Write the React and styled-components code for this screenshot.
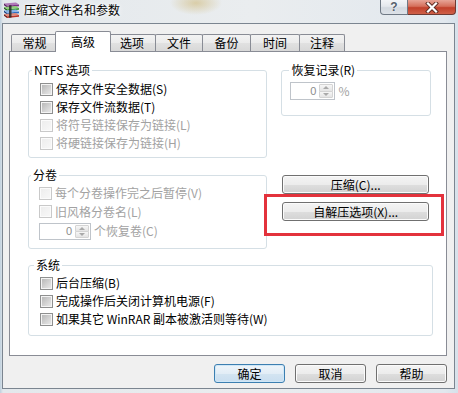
import React from "react";
import styled, { createGlobalStyle, css } from "styled-components";

const GlobalStyle = createGlobalStyle`
  html, body { margin: 0; padding: 0; }
  body {
    font-family: "Noto Sans CJK SC", "Noto Sans", sans-serif;
    font-size: 12px;
    color: #000;
  }
`;

const Frame = styled.div`
  width: 458px;
  height: 393px;
  overflow: hidden;
  display: flex;
  flex-direction: column;
  background:
    radial-gradient(ellipse 26px 12px at 196px 3px, rgba(205, 180, 110, 0.55), rgba(205, 180, 110, 0)),
    linear-gradient(to right, #bfd0de 0px, #e3e8ec 3px, #eaedef 55%, #e2e8ee 97%, #d6e1ea 100%);
`;

const TitleBar = styled.div`
  height: 23px;
  display: flex;
  align-items: flex-start;
  flex-shrink: 0;
`;

const AppIcon = styled.svg`
  margin: 2px 0 0 3px;
  flex-shrink: 0;
`;

const Title = styled.div`
  margin-left: 4px;
  line-height: 20px;
  font-size: 12px;
  color: #000;
  text-shadow: 0 0 6px #fff, 0 0 3px #fff;
`;

const Caption = styled.div`
  margin-left: auto;
  margin-right: 2px;
  display: flex;
`;

const CaptionButton = styled.div`
  height: 15px;
  box-sizing: border-box;
  display: flex;
  align-items: center;
  justify-content: center;
  border: 1px solid ${(p) => (p.$close ? "#6e3a33" : "#6f7985")};
  border-top: none;
  ${(p) =>
    p.$close
      ? css`
          width: 48px;
          border-left: none;
          border-radius: 0 0 4px 0;
          background: linear-gradient(#e7a597 0%, #d56f5b 45%, #c1402b 55%, #cf6048 100%);
        `
      : css`
          width: 28px;
          border-radius: 0 0 0 4px;
          background: linear-gradient(#f3f5f8 0%, #e4e8ed 45%, #d3d9e0 55%, #dde2e8 100%);
          color: #56606c;
          font-family: "Liberation Sans", sans-serif;
          font-weight: bold;
          font-size: 12px;
          text-shadow: 0 0 2px #fff;
        `}
`;

const Client = styled.div`
  flex: 1;
  margin: 0 3px 4px 2px;
  border: 1px solid #7b8590;
  background: #f0f0f0;
  padding: 7px 7px 0 6px;
  display: flex;
  flex-direction: column;
  min-height: 0;
`;

const TabRow = styled.div`
  height: 20px;
  display: flex;
  align-items: flex-end;
  padding-left: 2px;
  position: relative;
  z-index: 1;
`;

const Tab = styled.div`
  box-sizing: border-box;
  width: ${(p) => p.$w}px;
  height: 17px;
  margin-left: -1px;
  display: flex;
  align-items: center;
  justify-content: center;
  border: 1px solid #898c95;
  border-bottom: none;
  border-radius: 2px 2px 0 0;
  background: linear-gradient(#f3f3f3 0%, #ebebeb 50%, #e1e1e1 51%, #d8d8d8 100%);
  line-height: 14px;
  &:first-child {
    margin-left: 0;
  }
  ${(p) =>
    p.$active &&
    css`
      width: ${p.$w + 4}px;
      height: 21px;
      margin-left: -3px;
      margin-right: -2px;
      margin-bottom: -1px;
      padding-bottom: 1px;
      background: #fff;
      position: relative;
    `}
`;

const Panel = styled.div`
  box-sizing: border-box;
  height: 305px;
  border: 1px solid #898c95;
  background: #fff;
  padding: 11px 15px 0 18px;
  position: relative;
  display: flex;
  flex-direction: column;
`;

const TopArea = styled.div`
  display: flex;
  gap: 14px;
`;

const Column = styled.div`
  width: ${(p) => p.$w}px;
  display: flex;
  flex-direction: column;
  gap: ${(p) => p.$gap || 0}px;
`;

const Group = styled.fieldset`
  margin: 0;
  padding: 0;
  min-width: 0;
  border: 1px solid #d5dfe5;
  border-radius: 3px;
  ${(p) => p.$mt && css`margin-top: ${p.$mt}px;`}
`;

const Legend = styled.legend`
  padding: 0 2px;
  margin-left: ${(p) => p.$indent}px;
  line-height: 14px;
  font-size: 12px;
  color: #000;
`;

const GroupBody = styled.div`
  padding: ${(p) => p.$pad};
  display: flex;
  flex-direction: column;
`;

const CheckRow = styled.div`
  height: ${(p) => p.$h || 18}px;
  display: flex;
  align-items: center;
  gap: 3px;
  white-space: nowrap;
  line-height: 14px;
  color: ${(p) => (p.$disabled ? "#a2a2a2" : "#000")};
`;

const Box = styled.span`
  box-sizing: border-box;
  width: 13px;
  height: 13px;
  flex-shrink: 0;
  border: 1px solid ${(p) => (p.$disabled ? "#c9c9c9" : "#8e8f8f")};
  background: ${(p) =>
    p.$disabled
      ? "linear-gradient(135deg, #ececec, #f8f8f8)"
      : "linear-gradient(135deg, #b4b4b4 0%, #d6d6d6 60%, #ececec 100%)"};
  box-shadow: inset 0 0 0 1px ${(p) => (p.$disabled ? "#fbfbfb" : "#f4f4f4")};
`;

const Spin = styled.div`
  box-sizing: border-box;
  width: ${(p) => p.$w}px;
  height: ${(p) => p.$h}px;
  border: 1px solid #bfc4ca;
  background: #fff;
  display: flex;
  flex-shrink: 0;
`;

const SpinValue = styled.span`
  flex: 1;
  text-align: right;
  padding-right: 3px;
  color: #8c8c8c;
  font-family: "Liberation Sans", sans-serif;
  font-size: 11px;
  display: flex;
  align-items: center;
  justify-content: flex-end;
`;

const SpinButtons = styled.div`
  width: 15px;
  display: flex;
  flex-direction: column;
  padding: 1px 1px 1px 0;
  box-sizing: border-box;
`;

const SpinHalf = styled.div`
  flex: 1;
  border: 1px solid #d4d4d4;
  border-radius: 1px;
  background: linear-gradient(#f6f6f6, #e4e4e4);
  display: flex;
  align-items: center;
  justify-content: center;
  & + & {
    margin-top: -1px;
  }
  &::after {
    content: "";
    border-left: 3px solid transparent;
    border-right: 3px solid transparent;
    ${(p) =>
      p.$down
        ? css`border-top: 3px solid #a9a9a9;`
        : css`border-bottom: 3px solid #a9a9a9;`}
  }
`;

const InlineRow = styled.div`
  height: ${(p) => p.$h}px;
  display: flex;
  align-items: center;
  gap: 3px;
  line-height: 14px;
  color: #a2a2a2;
  white-space: nowrap;
`;

const Button = styled.div`
  box-sizing: border-box;
  height: 19px;
  width: ${(p) => (p.$w ? `${p.$w}px` : "auto")};
  display: flex;
  align-items: center;
  justify-content: center;
  border: 1px solid ${(p) => (p.$default ? "#3c7fb1" : "#707070")};
  border-radius: 3px;
  background: ${(p) =>
    p.$default
      ? "linear-gradient(#eef5fa 0%, #e2edf6 50%, #d3e4f1 51%, #c9def0 100%)"
      : "linear-gradient(#f4f4f4 0%, #ececec 50%, #dedede 51%, #d2d2d2 100%)"};
  box-shadow: inset 0 0 0 1px ${(p) => (p.$default ? "#cfe7f7" : "#fbfbfb")};
  line-height: 14px;
  white-space: nowrap;
  flex-shrink: 0;
`;

const SideButtons = styled.div`
  margin: 59px 2px 0 1px;
  display: flex;
  flex-direction: column;
  gap: 8px;
`;

const Highlight = styled.div`
  position: absolute;
  left: 254px;
  top: 142px;
  width: 180px;
  height: 42px;
  box-sizing: border-box;
  border: 3px solid #e3323c;
  pointer-events: none;
`;

const Footer = styled.div`
  margin-top: 8px;
  display: flex;
  justify-content: flex-end;
  gap: 10px;
`;

const tabs = [
  ["常规", 47],
  ["高级", 52],
  ["选项", 48],
  ["文件", 48],
  ["备份", 49],
  ["时间", 50],
  ["注释", 46],
];

const Check = ({ label, disabled }) => (
  <CheckRow $disabled={disabled}>
    <Box $disabled={disabled} />
    <span>{label}</span>
  </CheckRow>
);

const Spinner = ({ w, h }) => (
  <Spin $w={w} $h={h}>
    <SpinValue>0</SpinValue>
    <SpinButtons>
      <SpinHalf />
      <SpinHalf $down />
    </SpinButtons>
  </Spin>
);

const RarIcon = () => (
  <AppIcon width="17" height="16" viewBox="0 0 17 16">
    <path d="M1 1.5 L13 0.5 L16 2.5 L4 3.8 Z" fill="#b07ab8" />
    <path d="M1 1.5 L4 3.8 L4 5.5 L1 3.2 Z" fill="#5a1f63" />
    <path d="M4 3.8 L16 2.5 L16 4.2 L4 5.5 Z" fill="#7b2f86" />
    <path d="M1 5 L4 7.3 L4 9 L1 6.7 Z" fill="#1f5a1f" />
    <path d="M4 7.3 L16 6 L16 7.7 L4 9 Z" fill="#3a9a38" />
    <path d="M1 5 L13 4 L16 6 L4 7.3 Z" fill="#8fd07a" />
    <path d="M1 8.5 L4 10.8 L4 12.5 L1 10.2 Z" fill="#173f80" />
    <path d="M4 10.8 L16 9.5 L16 11.2 L4 12.5 Z" fill="#2f6fc0" />
    <path d="M1 8.5 L13 7.5 L16 9.5 L4 10.8 Z" fill="#86b4e8" />
    <path d="M1 12 L4 14.3 L4 16 L1 13.7 Z" fill="#6a1a14" />
    <path d="M4 14.3 L16 13 L16 14.7 L4 16 Z" fill="#b8352a" />
    <path d="M1 12 L13 11 L16 13 L4 14.3 Z" fill="#e08a7a" />
    <path d="M6 3.2 L8.5 3 L8.5 15.5 L6 15.8 Z" fill="#2a2a2a" opacity="0.85" />
  </AppIcon>
);

export default function App() {
  return (
    <>
      <GlobalStyle />
      <Frame>
        <TitleBar>
          <RarIcon />
          <Title>压缩文件名和参数</Title>
          <Caption>
            <CaptionButton>?</CaptionButton>
            <CaptionButton $close>
              <svg width="14" height="11" viewBox="0 0 14 11">
                <path d="M3 1.5 L11 9.5 M11 1.5 L3 9.5" stroke="#5b2a22" strokeWidth="4" strokeLinecap="square" />
                <path d="M3 1.5 L11 9.5 M11 1.5 L3 9.5" stroke="#fff" strokeWidth="2.2" strokeLinecap="square" />
              </svg>
            </CaptionButton>
          </Caption>
        </TitleBar>

        <Client>
          <TabRow>
            {tabs.map(([name, w]) => (
              <Tab key={name} $w={w} $active={name === "高级"}>
                {name}
              </Tab>
            ))}
          </TabRow>

          <Panel>
            <TopArea>
              <Column $w={240} $gap={10}>
                <Group>
                  <Legend $indent={3}>NTFS 选项</Legend>
                  <GroupBody $pad="3px 0 5px 11px">
                    <Check label="保存文件安全数据(S)" />
                    <Check label="保存文件流数据(T)" />
                    <Check label="将符号链接保存为链接(L)" disabled />
                    <Check label="将硬链接保存为链接(H)" disabled />
                  </GroupBody>
                </Group>
                <Group>
                  <Legend $indent={2}>分卷</Legend>
                  <GroupBody $pad="2px 0 7px 10px">
                    <Check label="每个分卷操作完之后暂停(V)" disabled />
                    <CheckRow $h={19} $disabled>
                      <Box $disabled />
                      <span>旧风格分卷名(L)</span>
                    </CheckRow>
                    <InlineRow $h={20}>
                      <Spinner w={52} h={17} />
                      <span>个恢复卷(C)</span>
                    </InlineRow>
                  </GroupBody>
                </Group>
              </Column>

              <Column $w={150}>
                <Group>
                  <Legend $indent={7}>恢复记录(R)</Legend>
                  <GroupBody $pad="5px 0 15px 8px">
                    <InlineRow $h={18}>
                      <Spinner w={45} h={18} />
                      <span>%</span>
                    </InlineRow>
                  </GroupBody>
                </Group>
                <SideButtons>
                  <Button>压缩(C)...</Button>
                  <Button>自解压选项(X)...</Button>
                </SideButtons>
              </Column>
            </TopArea>

            <Group $mt={9} style={{ width: 403 }}>
              <Legend $indent={5}>系统</Legend>
              <GroupBody $pad="2px 0 7px 11px">
                <Check label="后台压缩(B)" />
                <Check label="完成操作后关闭计算机电源(F)" />
                <Check label="如果其它 WinRAR 副本被激活则等待(W)" />
              </GroupBody>
            </Group>

            <Highlight />
          </Panel>

          <Footer>
            <Button $w={71} $default>确定</Button>
            <Button $w={71}>取消</Button>
            <Button $w={71}>帮助</Button>
          </Footer>
        </Client>
      </Frame>
    </>
  );
}
